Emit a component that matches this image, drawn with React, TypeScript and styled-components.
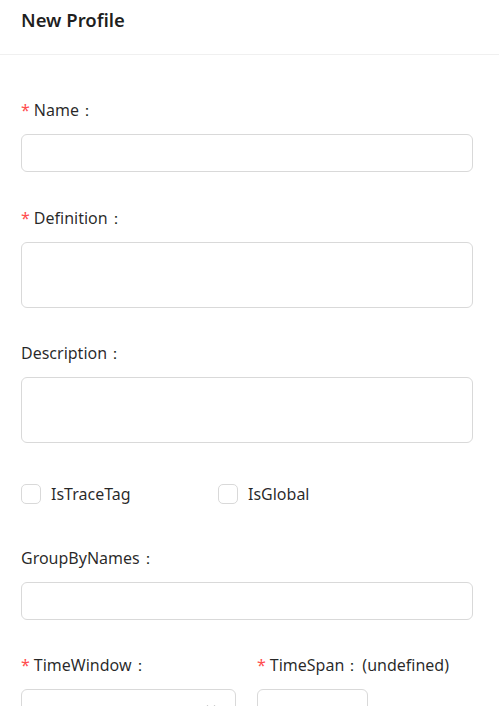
import styled, { createGlobalStyle } from 'styled-components';

const GlobalStyle = createGlobalStyle`
  html, body {
    margin: 0;
    padding: 0;
    background: #ffffff;
    overflow: hidden;
  }
  body {
    font-family: "Noto Sans", "Open Sans", "Liberation Sans", sans-serif;
    color: rgba(0, 0, 0, 0.85);
  }
`;

const Page = styled.div`
  width: 499px;
  height: 706px;
  overflow: hidden;
  background: #fff;
`;

const Header = styled.div`
  height: 55px;
  padding: 7px 21px 0;
  box-sizing: border-box;
  border-bottom: 1px solid #f0f0f0;
  font-size: 18.5px;
  font-weight: 600;
  line-height: 26px;
  color: rgba(0, 0, 0, 0.88);
`;

const Body = styled.div`
  padding: 43px 26px 0 21px;
  display: flex;
  flex-direction: column;
`;

const Item = styled.div<{ $gap?: number }>`
  display: flex;
  flex-direction: column;
  margin-bottom: ${(p) => p.$gap ?? 34}px;
`;

const Label = styled.label`
  height: 24px;
  line-height: 24px;
  font-size: 16px;
  margin-bottom: 12px;
  white-space: nowrap;
  color: rgba(0, 0, 0, 0.85);
`;

const Required = styled.span`
  color: #ff4d4f;
  margin-right: 4px;
`;

const Hint = styled.span`
  margin-left: 2px;
`;

const Input = styled.input`
  box-sizing: border-box;
  height: 38px;
  width: 100%;
  border: 1px solid #d9d9d9;
  border-radius: 6px;
  padding: 4px 11px;
  font-size: 16px;
  font-family: inherit;
  outline: none;
  background: #fff;
`;

const TextArea = styled.textarea`
  box-sizing: border-box;
  height: 66px;
  width: 100%;
  border: 1px solid #d9d9d9;
  border-radius: 6px;
  padding: 4px 11px;
  font-size: 16px;
  font-family: inherit;
  outline: none;
  resize: none;
  display: block;
`;

const CheckRow = styled.div`
  display: grid;
  grid-template-columns: 197px 1fr;
  margin: 39px 0 40px;
`;

const CheckItem = styled.label`
  display: flex;
  align-items: center;
  gap: 10px;
  height: 24px;
  font-size: 16px;
`;

const Box = styled.span`
  width: 20px;
  height: 20px;
  box-sizing: border-box;
  border: 1px solid #d9d9d9;
  border-radius: 5px;
  background: #fff;
`;

const Columns = styled.div`
  display: grid;
  grid-template-columns: 215px 111px;
  column-gap: 21px;
`;

const Col = styled.div`
  display: flex;
  flex-direction: column;
`;

const SelectBox = styled.div`
  position: relative;
  box-sizing: border-box;
  height: 38px;
  border: 1px solid #d9d9d9;
  border-radius: 6px;
  background: #fff;
`;

const Arrow = styled.svg`
  position: absolute;
  right: 18px;
  top: 11px;
`;

function ReqLabel({ text, required, hint }: { text: string; required?: boolean; hint?: string }) {
  return (
    <Label>
      {required && <Required>*</Required>}
      {text}：{hint && <Hint>{hint}</Hint>}
    </Label>
  );
}

export default function App() {
  return (
    <Page>
      <GlobalStyle />
      <Header>New Profile</Header>
      <Body>
        <Item>
          <ReqLabel text="Name" required />
          <Input />
        </Item>
        <Item $gap={33}>
          <ReqLabel text="Definition" required />
          <TextArea />
        </Item>
        <Item $gap={0}>
          <ReqLabel text="Description" />
          <TextArea />
        </Item>
        <CheckRow>
          <CheckItem>
            <Box />
            IsTraceTag
          </CheckItem>
          <CheckItem>
            <Box />
            IsGlobal
          </CheckItem>
        </CheckRow>
        <Item $gap={33}>
          <ReqLabel text="GroupByNames" />
          <Input />
        </Item>
        <Columns>
          <Col>
            <ReqLabel text="TimeWindow" required />
            <SelectBox>
              <Arrow width="12" height="12" viewBox="0 0 12 12">
                <path d="M2 4.5 L6 8.5 L10 4.5" fill="none" stroke="#bfbfbf" strokeWidth="1.3" />
              </Arrow>
            </SelectBox>
          </Col>
          <Col>
            <ReqLabel text="TimeSpan" required hint="(undefined)" />
            <SelectBox />
          </Col>
        </Columns>
      </Body>
    </Page>
  );
}
